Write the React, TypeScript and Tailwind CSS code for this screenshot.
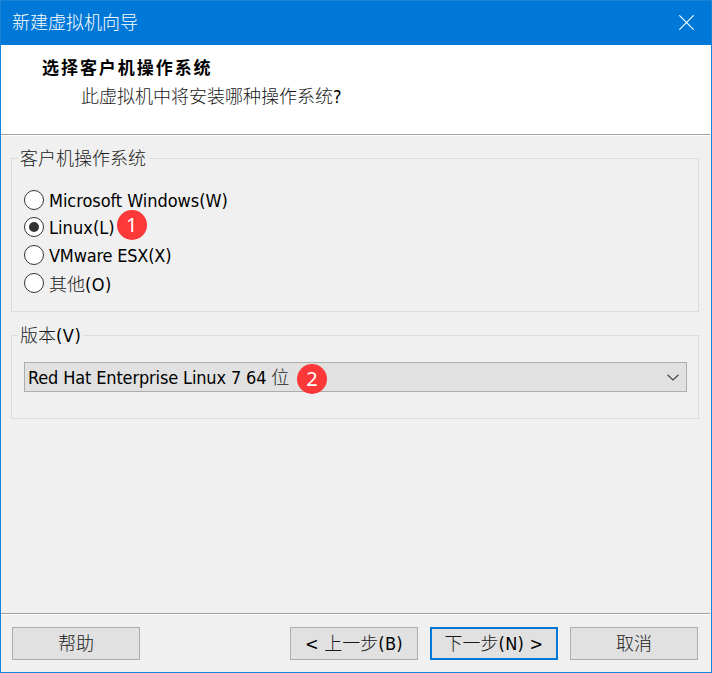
import React from "react";

const latin = "font-['DejaVu_Sans_Condensed','DejaVu_Sans','Noto_Sans_CJK_SC',sans-serif] [font-stretch:condensed]";

function Cjk({ children }: { children: React.ReactNode }) {
  return <span className="font-['Noto_Sans_CJK_SC',sans-serif] text-[18px] font-light tracking-normal text-[#1a1a1a]">{children}</span>;
}

function Radio({ checked = false, children }: { checked?: boolean; children: React.ReactNode }) {
  return (
    <div className="flex h-full items-center gap-[5px]">
      <span className="flex size-5 shrink-0 items-center justify-center rounded-full border border-[#333] bg-white">
        {checked && <span className="size-[10px] rounded-full bg-[#333]" />}
      </span>
      <span className="whitespace-nowrap pt-0.5 leading-5">{children}</span>
    </div>
  );
}

function Badge({ children }: { children: React.ReactNode }) {
  return (
    <span className="flex size-[30px] items-center justify-center rounded-full bg-[#fc3838] font-['Noto_Sans',sans-serif] text-[20px] leading-none tracking-normal text-white">
      {children}
    </span>
  );
}

function Button({ primary = false, className = "", children }: { primary?: boolean; className?: string; children: React.ReactNode }) {
  return (
    <button
      className={`flex h-[33px] w-32 items-center justify-center whitespace-pre bg-[#e1e1e1] pb-px leading-5 tracking-[0.3px] ${
        primary ? "border-2 border-[#0078d7]" : "border border-[#adadad]"
      } ${className}`}
    >
      <span>{children}</span>
    </button>
  );
}

export default function App() {
  return (
    <div className={`flex h-[673px] w-[712px] flex-col border border-[#1883d7] bg-[#f0f0f0] text-[18px] text-black ${latin}`}>
      <header className="flex h-11 shrink-0 items-center justify-between bg-[#0078d7] pb-0.5 pl-[11px] pr-[17px]">
        <span className="pb-0.5 font-['Noto_Sans_CJK_SC',sans-serif] text-[18px] font-light leading-5 text-white">新建虚拟机向导</span>
        <svg width="15" height="15" viewBox="0 0 15 15" stroke="white" strokeWidth="1.1" fill="none">
          <path d="M0.3 0.3 14.7 14.7M14.7 0.3 0.3 14.7" />
        </svg>
      </header>

      <section className="h-[89px] shrink-0 bg-white pt-3">
        <div className="pl-[41px] font-['Noto_Sans_CJK_SC',sans-serif] text-[17px] font-bold leading-5 tracking-[1.95px]">
          选择客户机操作系统
        </div>
        <div className="mt-2 pl-20 leading-5">
          <Cjk>此虚拟机中将安装哪种操作系统</Cjk>?
        </div>
      </section>
      <div className="mr-px h-0.5 shrink-0 border-b border-t border-b-white border-t-[#a0a0a0]" />

      <main className="flex-1 px-[10px] pt-[22px]">
        <section className="h-[154px] w-[688px] border border-[#dcdcdc]">
          <h2 className="-mt-3 ml-1.5 h-5 w-fit bg-[#f0f0f0] pl-0.5 pr-[3px] leading-5">
            <Cjk>客户机操作系统</Cjk>
          </h2>
          <div className="ml-3 mt-[19px] grid h-[111px] grid-rows-[27px_28px_28px_28px]">
            <Radio><span className="tracking-[-0.05px]">Microsoft Windows(W)</span></Radio>
            <div className="flex h-[28px] items-center gap-0.5">
              <Radio checked><span className="tracking-[0.05px]">Linux(L)</span></Radio>
              <div className="-mt-1"><Badge>1</Badge></div>
            </div>
            <Radio><span className="tracking-[-0.2px]">VMware ESX(X)</span></Radio>
            <Radio><Cjk>其他</Cjk><span className="tracking-[0.5px]">(O)</span></Radio>
          </div>
        </section>

        <section className="mt-[23px] h-[84px] w-[688px] border border-[#dcdcdc]">
          <h2 className="-mt-3 ml-1.5 h-5 w-fit bg-[#f0f0f0] pl-0.5 pr-[2px] leading-5">
            <Cjk>版本</Cjk><span className="tracking-[0.5px]">(V)</span>
          </h2>
          <div className="ml-3 mt-[18px] flex h-[30px] w-[663px] items-center border border-[#adadad] bg-[#e1e1e1] pl-[3px] pr-[7px]">
            <span className="w-[269px] whitespace-nowrap leading-5 tracking-[-0.15px]">
              Red Hat Enterprise Linux 7 64 <Cjk>位</Cjk>
            </span>
            <div className="-mb-[3px]"><Badge>2</Badge></div>
            <svg className="ml-auto" width="12" height="7" viewBox="0 0 12 7" fill="none" stroke="#444" strokeWidth="1.2">
              <path d="M0.5 0.8 6 6 11.5 0.8" />
            </svg>
          </div>
        </section>
      </main>

      <div className="mr-px h-0.5 shrink-0 border-b border-t border-b-white border-t-[#a0a0a0]" />
      <footer className="flex h-[57px] shrink-0 items-start pl-[11px] pt-3">
        <Button><Cjk>帮助</Cjk></Button>
        <Button className="ml-[150px]">{"< "}<Cjk>上一步</Cjk>(B)</Button>
        <Button primary className="ml-3"><Cjk>下一步</Cjk>{"(N) >"}</Button>
        <Button className="ml-3"><Cjk>取消</Cjk></Button>
      </footer>
    </div>
  );
}
